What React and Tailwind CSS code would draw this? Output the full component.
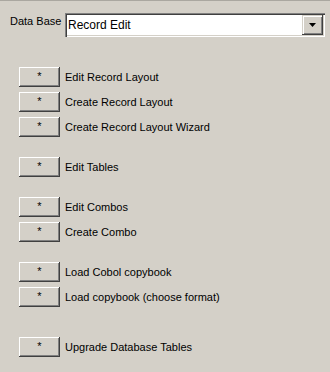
const groups = [
  ["Edit Record Layout", "Create Record Layout", "Create Record Layout Wizard"],
  ["Edit Tables"],
  ["Edit Combos", "Create Combo"],
  ["Load Cobol copybook", "Load copybook (choose format)"],
];

function StarButton() {
  return (
    <button className="w-[41px] h-[20px] bg-[#d4d0c8] shadow-[inset_-1px_-1px_#404040,inset_1px_1px_#ffffff,inset_-2px_-2px_#808080] flex items-start justify-center pt-[3px] text-[11px] leading-[13px] text-black">
      *
    </button>
  );
}

function Row({ label }) {
  return (
    <div className="flex items-center h-[20px]">
      <StarButton />
      <span className="ml-[5px] text-[11px] leading-[13px] text-black">{label}</span>
    </div>
  );
}

export default function App() {
  return (
    <div className="w-[330px] h-[372px] bg-[#d4d0c8] border-t border-[#aaa7a0] font-['Liberation_Sans',Arial,sans-serif] overflow-hidden">
      <div className="flex items-start pl-[10px] pt-[12px]">
        <span className="w-[55px] pt-[2px] text-[11px] leading-[13px] text-black">Data Base</span>
        <div className="w-[260px] h-[24px] bg-white shadow-[inset_1px_1px_#808080,inset_2px_2px_#404040,inset_-1px_-1px_#ffffff,inset_-2px_-2px_#d4d0c8] flex items-center pl-[3px] pr-[2px]">
          <span className="flex-1 text-[12px] leading-[14px] text-black">Record Edit</span>
          <div className="w-[21px] h-[20px] bg-[#d4d0c8] shadow-[inset_-1px_-1px_#404040,inset_1px_1px_#d4d0c8,inset_2px_2px_#ffffff,inset_-2px_-2px_#808080] flex items-center justify-center">
            <svg width="7" height="4" viewBox="0 0 7 4">
              <path d="M0 0h7L3.5 4z" fill="#000" />
            </svg>
          </div>
        </div>
      </div>
      <div className="flex flex-col pl-[19px] pt-[30px] gap-[20px]">
        {groups.map((g, i) => (
          <div key={i} className="flex flex-col gap-[5px]">
            {g.map((l) => (
              <Row key={l} label={l} />
            ))}
          </div>
        ))}
        <div className="mt-[10px]">
          <Row label="Upgrade Database Tables" />
        </div>
      </div>
    </div>
  );
}
